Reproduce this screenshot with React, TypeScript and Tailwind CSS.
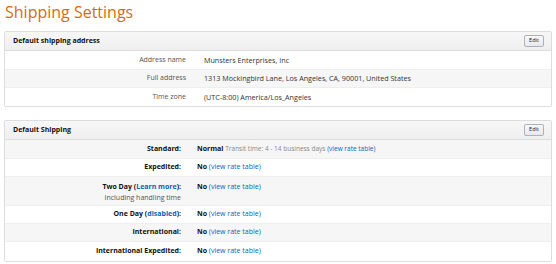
import React from 'react';

function EditButton() {
  return (
    <button className="h-[12px] w-[20px] rounded-[2px] border border-[#adb1b8] bg-gradient-to-b from-[#f7f8fa] to-[#e7e9ec] text-[5.5px] leading-none text-[#111]">
      Edit
    </button>
  );
}

function PanelHeader({ title }: { title: string }) {
  return (
    <div className="flex h-[19px] items-center justify-between border-b border-[#dddddd] bg-gradient-to-b from-[#f7f7f7] to-[#efefef] pl-[8px] pr-[7px]">
      <span className="text-[7px] font-bold text-[#111]">{title}</span>
      <EditButton />
    </div>
  );
}

const address = [
  { label: 'Address name', value: 'Munsters Enterprises, Inc', h: 'h-[19px]' },
  { label: 'Full address', value: '1313 Mockingbird Lane, Los Angeles, CA, 90001, United States', h: 'h-[18px]' },
  { label: 'Time zone', value: '(UTC-8:00) America/Los_Angeles', h: 'h-[18px]' },
];

function Rate() {
  return (
    <>
      <span className="font-bold text-[#111]">No</span>{' '}
      <span className="text-[#0066c0]">(view rate table)</span>
    </>
  );
}

export default function App() {
  return (
    <div className="h-[264px] w-[556px] overflow-hidden bg-white font-['Open_Sans',sans-serif] text-[7px] text-[#333]">
      <h1 className="pl-[5px] pt-[1px] text-[16px] leading-[22px] text-[#d56b16]">Shipping Settings</h1>

      <div className="mx-[4px] mt-[8px] w-[548px] rounded-[2px] border border-[#dddddd]">
        <PanelHeader title="Default shipping address" />
        {address.map((r, i) => (
          <div
            key={r.label}
            className={`flex items-center ${r.h} ${i % 2 === 1 ? 'bg-[#f6f6f6]' : 'bg-white'} ${i < address.length - 1 ? 'border-b border-[#eeeeee]' : ''}`}
          >
            <div className="w-[181px] text-right text-[#555]">{r.label}</div>
            <div className="pl-[18px] text-[7.2px] text-[#333]">{r.value}</div>
          </div>
        ))}
      </div>

      <div className="mx-[4px] mt-[13px] w-[548px] rounded-[2px] border border-[#dddddd]">
        <PanelHeader title="Default Shipping" />
        <div className="flex h-[19px] items-center border-b border-[#eeeeee] bg-[#f6f6f6]">
          <div className="w-[176px] text-right font-bold text-[#111]">Standard:</div>
          <div className="pl-[16px]">
            <span className="font-bold text-[#111]">Normal</span>{' '}
            <span className="text-[6.5px] text-[#888]">Transit time: 4 - 14 business days</span>{' '}
            <span className="text-[6.5px] text-[#0066c0]">(view rate table)</span>
          </div>
        </div>
        <div className="flex h-[18px] items-center border-b border-[#eeeeee] bg-white">
          <div className="w-[176px] text-right font-bold text-[#111]">Expedited:</div>
          <div className="pl-[16px]"><Rate /></div>
        </div>
        <div className="flex h-[29px] items-start border-b border-[#eeeeee] bg-[#f6f6f6] pt-[4px]">
          <div className="w-[176px] text-right leading-[11px]">
            <div className="font-bold text-[#111]">
              Two Day (<span className="text-[#0066c0]">Learn more</span>):
            </div>
            <div className="text-[#555]">Including handling time</div>
          </div>
          <div className="pl-[16px] leading-[11px]"><Rate /></div>
        </div>
        <div className="flex h-[18px] items-center border-b border-[#eeeeee] bg-white">
          <div className="w-[176px] text-right font-bold text-[#111]">
            One Day (<span className="text-[#0066c0]">disabled</span>):
          </div>
          <div className="pl-[16px]"><Rate /></div>
        </div>
        <div className="flex h-[18px] items-center border-b border-[#eeeeee] bg-[#f6f6f6]">
          <div className="w-[176px] text-right font-bold text-[#111]">International:</div>
          <div className="pl-[16px]"><Rate /></div>
        </div>
        <div className="flex h-[19px] items-center bg-white">
          <div className="w-[176px] text-right font-bold text-[#111]">International Expedited:</div>
          <div className="pl-[16px]"><Rate /></div>
        </div>
      </div>
    </div>
  );
}
